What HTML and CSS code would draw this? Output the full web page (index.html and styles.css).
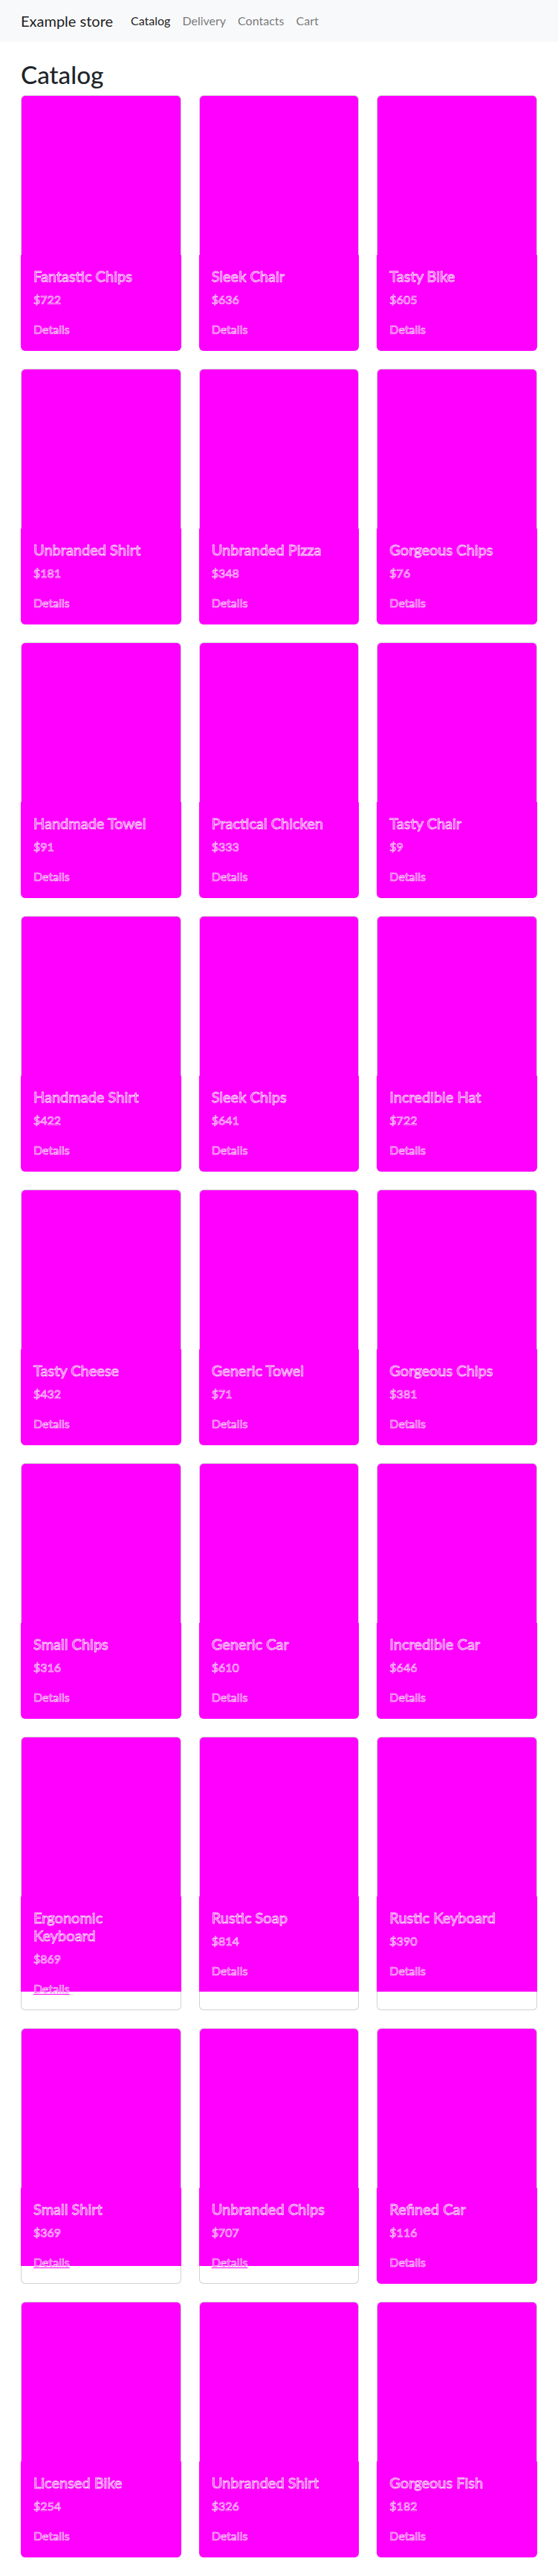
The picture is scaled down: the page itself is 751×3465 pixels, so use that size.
FILE: index.html
```html
<!DOCTYPE html>
<html lang="en">
<head>
<meta charset="utf-8">
<title>Example store</title>
<link rel="stylesheet" href="styles.css">
</head>
<body>
<nav class="navbar">
  <a class="brand" href="#">Example store</a>
  <ul class="nav">
    <li><a class="nav-link active" href="#">Catalog</a></li>
    <li><a class="nav-link" href="#">Delivery</a></li>
    <li><a class="nav-link" href="#">Contacts</a></li>
    <li><a class="nav-link" href="#">Cart</a></li>
  </ul>
</nav>
<main class="main">
  <h1 class="page-title">Catalog</h1>
  <div class="grid">
    <div class="card"><div class="card-img"></div><div class="card-body"><h5 class="card-title">Fantastic Chips</h5><p class="price">$722</p><a class="details" href="#">Details</a></div></div>
    <div class="card"><div class="card-img"></div><div class="card-body"><h5 class="card-title">Sleek Chair</h5><p class="price">$636</p><a class="details" href="#">Details</a></div></div>
    <div class="card"><div class="card-img"></div><div class="card-body"><h5 class="card-title">Tasty Bike</h5><p class="price">$605</p><a class="details" href="#">Details</a></div></div>

    <div class="card"><div class="card-img"></div><div class="card-body"><h5 class="card-title">Unbranded Shirt</h5><p class="price">$181</p><a class="details" href="#">Details</a></div></div>
    <div class="card"><div class="card-img"></div><div class="card-body"><h5 class="card-title">Unbranded Pizza</h5><p class="price">$348</p><a class="details" href="#">Details</a></div></div>
    <div class="card"><div class="card-img"></div><div class="card-body"><h5 class="card-title">Gorgeous Chips</h5><p class="price">$76</p><a class="details" href="#">Details</a></div></div>

    <div class="card"><div class="card-img"></div><div class="card-body"><h5 class="card-title">Handmade Towel</h5><p class="price">$91</p><a class="details" href="#">Details</a></div></div>
    <div class="card"><div class="card-img"></div><div class="card-body"><h5 class="card-title">Practical Chicken</h5><p class="price">$333</p><a class="details" href="#">Details</a></div></div>
    <div class="card"><div class="card-img"></div><div class="card-body"><h5 class="card-title">Tasty Chair</h5><p class="price">$9</p><a class="details" href="#">Details</a></div></div>

    <div class="card"><div class="card-img"></div><div class="card-body"><h5 class="card-title">Handmade Shirt</h5><p class="price">$422</p><a class="details" href="#">Details</a></div></div>
    <div class="card"><div class="card-img"></div><div class="card-body"><h5 class="card-title">Sleek Chips</h5><p class="price">$641</p><a class="details" href="#">Details</a></div></div>
    <div class="card"><div class="card-img"></div><div class="card-body"><h5 class="card-title">Incredible Hat</h5><p class="price">$722</p><a class="details" href="#">Details</a></div></div>

    <div class="card"><div class="card-img"></div><div class="card-body"><h5 class="card-title">Tasty Cheese</h5><p class="price">$432</p><a class="details" href="#">Details</a></div></div>
    <div class="card"><div class="card-img"></div><div class="card-body"><h5 class="card-title">Generic Towel</h5><p class="price">$71</p><a class="details" href="#">Details</a></div></div>
    <div class="card"><div class="card-img"></div><div class="card-body"><h5 class="card-title">Gorgeous Chips</h5><p class="price">$381</p><a class="details" href="#">Details</a></div></div>

    <div class="card"><div class="card-img"></div><div class="card-body"><h5 class="card-title">Small Chips</h5><p class="price">$316</p><a class="details" href="#">Details</a></div></div>
    <div class="card"><div class="card-img"></div><div class="card-body"><h5 class="card-title">Generic Car</h5><p class="price">$610</p><a class="details" href="#">Details</a></div></div>
    <div class="card"><div class="card-img"></div><div class="card-body"><h5 class="card-title">Incredible Car</h5><p class="price">$646</p><a class="details" href="#">Details</a></div></div>

    <div class="card"><div class="card-img"></div><div class="card-body mask-top"><h5 class="card-title">Ergonomic Keyboard</h5><p class="price">$869</p><a class="details" href="#">Details</a></div></div>
    <div class="card"><div class="card-img"></div><div class="card-body mask-top"><h5 class="card-title">Rustic Soap</h5><p class="price">$814</p><a class="details" href="#">Details</a></div></div>
    <div class="card"><div class="card-img"></div><div class="card-body mask-top"><h5 class="card-title">Rustic Keyboard</h5><p class="price">$390</p><a class="details" href="#">Details</a></div></div>

    <div class="card"><div class="card-img"></div><div class="card-body mask-short"><h5 class="card-title">Small Shirt</h5><p class="price">$369</p><a class="details" href="#">Details</a></div></div>
    <div class="card"><div class="card-img"></div><div class="card-body mask-short"><h5 class="card-title">Unbranded Chips</h5><p class="price">$707</p><a class="details" href="#">Details</a></div></div>
    <div class="card"><div class="card-img"></div><div class="card-body"><h5 class="card-title">Refined Car</h5><p class="price">$116</p><a class="details" href="#">Details</a></div></div>

    <div class="card"><div class="card-img"></div><div class="card-body"><h5 class="card-title">Licensed Bike</h5><p class="price">$254</p><a class="details" href="#">Details</a></div></div>
    <div class="card"><div class="card-img"></div><div class="card-body"><h5 class="card-title">Unbranded Shirt</h5><p class="price">$326</p><a class="details" href="#">Details</a></div></div>
    <div class="card"><div class="card-img"></div><div class="card-body"><h5 class="card-title">Gorgeous Fish</h5><p class="price">$182</p><a class="details" href="#">Details</a></div></div>
  </div>
</main>
</body>
</html>
```

FILE: styles.css
```css
* { box-sizing: border-box; }
html, body { margin: 0; padding: 0; }
body {
  font-family: Lato, "Liberation Sans", sans-serif;
  font-size: 16px;
  line-height: 1.5;
  color: #212529;
  background: #fff;
}
.navbar {
  display: flex;
  align-items: center;
  height: 56px;
  padding: 8px 28px;
  background: #f8f9fa;
}
.brand {
  font-size: 20px;
  line-height: 30px;
  padding: 5px 0;
  margin-right: 16px;
  color: rgba(0,0,0,.9);
  text-decoration: none;
}
.nav {
  display: flex;
  list-style: none;
  margin: 0;
  padding: 0;
}
.nav-link {
  display: block;
  padding: 8px;
  color: rgba(0,0,0,.55);
  text-decoration: none;
}
.nav-link.active { color: rgba(0,0,0,.9); }
.main {
  padding: 24px 28px 25px;
}
.page-title {
  margin: 0 0 8px;
  font-size: 33.27px;
  font-weight: 500;
  line-height: 40px;
}
.grid {
  display: grid;
  grid-template-columns: repeat(3, 1fr);
  column-gap: 24px;
  row-gap: 24px;
}
.card {
  display: flex;
  flex-direction: column;
  border: 1px solid rgba(0,0,0,.175);
  border-radius: 6px;
  background: #fff;
}
.card-img {
  height: 214px;
  background: #ff00ff;
  border-radius: 5px 5px 0 0;
}
.card-body {
  flex: 1 1 auto;
  margin: 0 -1px -1px;
  padding: 16px 17px 17px;
  background: #ff00ff;
  border-radius: 0 0 6px 6px;
}
.card-body.mask-top {
  background: linear-gradient(to bottom, #ff00ff 0, #ff00ff 128px, transparent 128px);
}
.card-body.mask-short {
  background: linear-gradient(to bottom, #ff00ff 0, #ff00ff 105px, transparent 105px);
}
.card-title, .price, .details {
  color: #ff00ff;
  -webkit-text-stroke: 0.9px rgba(240,240,240,.95);
}
.card-title {
  margin: 0 0 8px;
  font-size: 20px;
  font-weight: 400;
  line-height: 24px;
}
.price {
  margin: 0 0 16px;
  -webkit-text-stroke-width: 0.7px;
}
.details {
  text-decoration: underline;
  text-decoration-color: #ff00ff;
  -webkit-text-stroke-width: 0.7px;
}
```
